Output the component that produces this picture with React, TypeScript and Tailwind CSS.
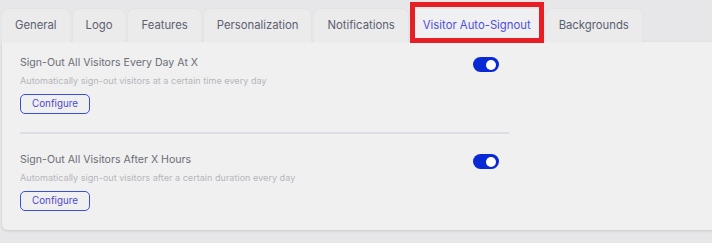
import React from "react";

const tabs = [
  "General",
  "Logo",
  "Features",
  "Personalization",
  "Notifications",
  "Visitor Auto-Signout",
  "Backgrounds",
];

const settings = [
  {
    title: "Sign-Out All Visitors Every Day At X",
    info: "Automatically sign-out visitors at a certain time every day",
  },
  {
    title: "Sign-Out All Visitors After X Hours",
    info: "Automatically sign-out visitors after a certain duration every day",
  },
];

const Toggle = () => (
  <div className="ml-auto mr-[10px] mt-[2px] flex h-[15px] w-[26px] shrink-0 items-center justify-end rounded-full bg-[#0829d3] pr-[3px]">
    <div className="size-[10px] rounded-full bg-white" />
  </div>
);

export default function App() {
  const active = "Visitor Auto-Signout";

  return (
    <div
      className="h-[243px] w-[712px] overflow-hidden bg-[#e7e7e9]"
      style={{ fontFamily: "Inter, 'Noto Sans', sans-serif" }}
    >
      <div className="flex gap-[3px] pl-[2px] pt-[9px]">
        {tabs.map((tab) => (
          <div
            key={tab}
            className={
              tab === active
                ? "relative flex h-[33px] items-center rounded-t-md bg-[#f0eff1] px-[12px] text-[11.3px] text-[#4d4fdc]"
                : "flex h-[33px] items-center rounded-t-md bg-[#ebebec] px-[13px] text-[11.3px] text-[#5b6070] shadow-[0_0_2px_rgba(0,0,0,0.06)]"
            }
          >
            {tab}
            {tab === active && (
              <div className="absolute -left-[1px] -right-[1px] -top-[7px] bottom-[-1px] border-[5px] border-[#e81e25]" />
            )}
          </div>
        ))}
      </div>

      <div className="ml-[2px] w-[730px] rounded-bl-md bg-[#f0f0f0] pb-[19px] pl-[18px] pt-[13px] shadow-[0_1px_3px_rgba(0,0,0,0.12)]">
        {settings.map((item, index) => (
          <div key={item.title}>
            {index > 0 && (
              <div className="mb-[18px] mt-[18px] h-[2px] w-[489px] bg-[#dedde3]" />
            )}
            <div className="flex w-[489px]">
              <div className="flex flex-col items-start">
                <p className="text-[10.6px] leading-[16px] text-[#6c6e76]">
                  {item.title}
                </p>
                <p className="mt-[3px] text-[9.1px] leading-[14px] text-[#b6b6bc]">
                  {item.info}
                </p>
                <button className="mt-[6px] flex h-[20px] w-[70px] items-center justify-center rounded-[5px] border border-[#3c4fdb] text-[9.8px] text-[#4d48cf]">
                  Configure
                </button>
              </div>
              <Toggle />
            </div>
          </div>
        ))}
      </div>
    </div>
  );
}
